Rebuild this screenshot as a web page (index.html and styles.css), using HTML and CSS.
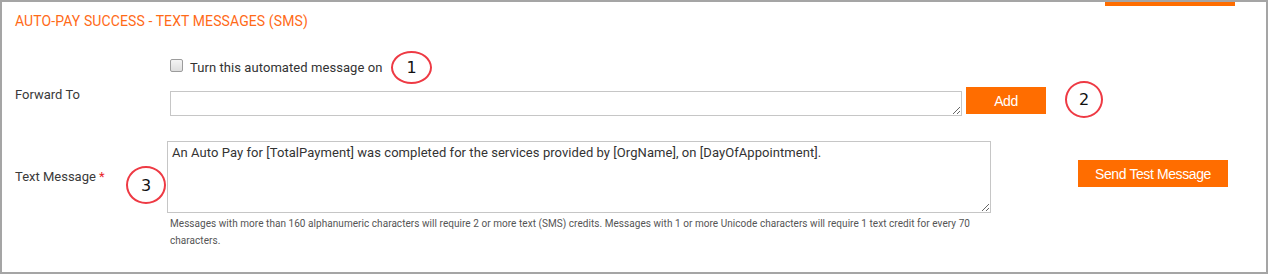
FILE: index.html
```html
<!DOCTYPE html>
<html lang="en">
<head>
<meta charset="utf-8">
<title>Auto-Pay Success - Text Messages</title>
<link rel="stylesheet" href="styles.css">
</head>
<body>
<div class="frame">
  <div class="tabstrip"><div class="tab-edge"></div></div>
  <h2 class="title">AUTO-PAY SUCCESS - TEXT MESSAGES (SMS)</h2>

  <div class="row row-toggle">
    <div class="label"></div>
    <label class="toggle">
      <input type="checkbox" class="check">
      <span class="toggle-text">Turn this automated message on</span>
    </label>
  </div>

  <div class="row row-forward">
    <div class="label">Forward To</div>
    <div class="forward-field">
      <textarea class="forward-input"></textarea>
      <button class="btn btn-add">Add</button>
    </div>
  </div>

  <div class="row row-message">
    <div class="label label-msg">Text Message <span class="req">*</span></div>
    <div class="msg-col">
      <textarea class="msg-input">An Auto Pay for [TotalPayment] was completed for the services provided by [OrgName], on [DayOfAppointment].</textarea>
      <p class="hint">Messages with more than 160 alphanumeric characters will require 2 or more text (SMS) credits. Messages with 1 or more Unicode characters will require 1 text credit for every 70 characters.</p>
    </div>
    <button class="btn btn-send">Send Test Message</button>
  </div>

  <span class="callout c1">1</span>
  <span class="callout c2">2</span>
  <span class="callout c3">3</span>
</div>
</body>
</html>
```

FILE: styles.css
```css
html, body {
  margin: 0;
  padding: 0;
  background: #ffffff;
}

.frame {
  position: relative;
  box-sizing: border-box;
  width: 1268px;
  height: 274px;
  border: 2px solid #a5a5a5;
  padding: 0 0 0 13px;
  font-family: Roboto, "Liberation Sans", sans-serif;
  color: #333333;
  overflow: hidden;
}

.tabstrip {
  display: flex;
  justify-content: flex-end;
  padding-right: 31px;
  height: 4px;
}

.tab-edge {
  width: 130px;
  height: 4px;
  background: #ff6d00;
}

.title {
  margin: 7px 0 0 0;
  font-size: 14px;
  line-height: 16px;
  font-weight: 400;
  letter-spacing: 0.1px;
  color: #ff6a17;
}

.row {
  display: flex;
  align-items: flex-start;
}

.label {
  width: 152px;
  flex: 0 0 152px;
  font-size: 13px;
  line-height: 15px;
  color: #3a3a3a;
}

.row-toggle {
  margin-top: 30px;
}

.toggle {
  display: flex;
  align-items: flex-start;
  margin-left: 3px;
}

.check {
  -webkit-appearance: none;
  appearance: none;
  box-sizing: border-box;
  width: 13px;
  height: 13px;
  margin: 0;
  border: 1px solid #9c9c9c;
  border-radius: 2px;
  background: linear-gradient(#f4f4f4, #dedede);
}

.toggle-text {
  margin: 1px 0 0 7px;
  font-size: 13px;
  line-height: 15px;
  letter-spacing: 0.07px;
  color: #333333;
}

.row-forward {
  margin-top: 12px;
}

.forward-field {
  display: flex;
  align-items: flex-start;
  margin-left: 3px;
}

.forward-input {
  box-sizing: border-box;
  width: 792px;
  height: 25px;
  margin: 4px 0 0 0;
  padding: 2px 4px;
  border: 1px solid #c6c6c6;
  font-family: Roboto, "Liberation Sans", sans-serif;
  font-size: 13px;
  resize: both;
}

.btn {
  border: none;
  background: #ff6d00;
  color: #ffffff;
  font-family: "Liberation Sans", Arial, sans-serif;
  font-size: 14px;
  letter-spacing: -0.4px;
  padding: 0;
  cursor: pointer;
}

.btn-add {
  width: 80px;
  height: 27px;
  margin-left: 4px;
}

.row-message {
  margin-top: 25px;
}

.label-msg {
  margin-top: 28px;
}

.req {
  color: #e8262a;
}

.msg-col {
  display: flex;
  flex-direction: column;
  width: 824px;
}

.msg-input {
  box-sizing: border-box;
  width: 824px;
  height: 72px;
  margin: 0;
  padding: 3px 4px;
  border: 1px solid #c6c6c6;
  font-family: Roboto, "Liberation Sans", sans-serif;
  font-size: 13px;
  line-height: 15px;
  letter-spacing: 0.06px;
  color: #333333;
  resize: both;
}

.hint {
  margin: 2px 0 0 0;
  padding: 0 4px 0 3px;
  font-size: 10px;
  line-height: 17px;
  letter-spacing: 0.05px;
  color: #555555;
}

.btn-send {
  width: 150px;
  height: 27px;
  margin: 19px 0 0 87px;
}

.callout {
  position: absolute;
  box-sizing: border-box;
  display: flex;
  align-items: center;
  justify-content: center;
  border: 2.5px solid #ee3a44;
  border-radius: 50%;
  font-family: "DejaVu Sans", sans-serif;
  font-size: 16px;
  color: #111111;
  background: #ffffff;
}

.c1 {
  left: 389px;
  top: 49px;
  width: 41px;
  height: 33px;
}

.c2 {
  left: 1063px;
  top: 79px;
  width: 38px;
  height: 37px;
}

.c3 {
  left: 124px;
  top: 164px;
  width: 40px;
  height: 38px;
}
```
